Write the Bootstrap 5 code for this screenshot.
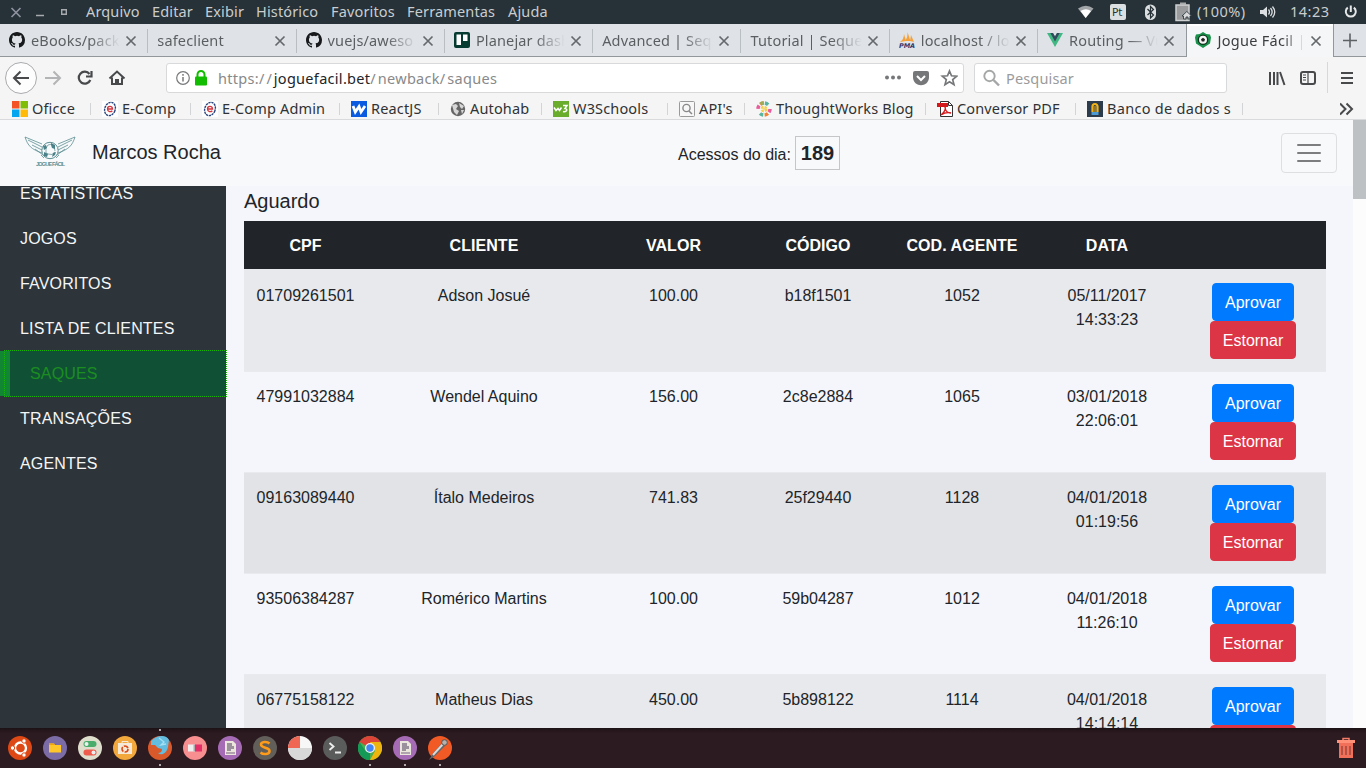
<!DOCTYPE html>
<html lang="pt-BR">
<head>
<meta charset="utf-8">
<title>Jogue Fácil</title>
<link rel="stylesheet" href="https://cdn.jsdelivr.net/npm/bootstrap@5.3.0/dist/css/bootstrap.min.css">
<style>
body{width:1366px;height:768px;overflow:hidden;font-family:"Liberation Sans",Arial,sans-serif;color:#212529;background:#f5f6fb}
svg{display:block;flex:none}
.chrome{font-family:"Noto Sans",sans-serif;font-size:14.5px;letter-spacing:.15px;white-space:nowrap}
.sysbar{height:24px;background:#263238;color:#c9cdcf;line-height:23px}
.wm{width:86px;padding-left:10px}
.menus{display:grid;grid-template-columns:66px 53px 51px 75px 76px 101px 60px}
.tray{display:grid;grid-template-columns:32px 33px 32px 22px 63px 30px 54px 22px;width:288px}
.tray span{letter-spacing:.5px;margin-top:-1px}
.tabs{height:33px;background:#dfe3e8;border-bottom:1px solid #92979c;color:#5c5f61}
.tabx{width:148.3px;height:32px;padding-left:9px;position:relative;line-height:34px}
.tabx:after{content:"";position:absolute;right:0;top:5px;height:24px;border-right:1px solid #b9bec2}
.tabx:nth-child(8):after,.tabx.on:after{display:none}
.tabx .ttl{flex:1;min-width:0;overflow:hidden;margin-left:6px;-webkit-mask:linear-gradient(90deg,#000 calc(100% - 30px),transparent)}
.tabx.plain .ttl{margin-left:0}
.tabx .cls{margin:1px 11px 0 5px}
.tabx.on{background:#f5f6f7;border:1px solid #92979c;border-width:0 1px;height:33px;width:147.6px;color:#3b3e40;padding:0 0 1px 8px;box-shadow:inset 0 2px #fff}
.tabx.on .ttl{letter-spacing:.3px;-webkit-mask:linear-gradient(90deg,#000 calc(100% - 22px),transparent)}
.tools{height:42px;background:#f5f5f6}
.back{width:32px;height:32px;margin-left:5px;border:1px solid #a9abad;border-radius:50%;background:#fdfdfd}
.field{height:30px;background:#fff;border:1px solid #d8d9da;border-radius:3px;color:#88898a}
.url{width:798px;margin-left:40px;padding:0 5px 0 9px}
.url .addr{letter-spacing:.3px;margin-top:1px}
.url .sl{letter-spacing:2px}
.find{width:253px;margin-left:10px;padding-left:8px;color:#9a9b9c}
.find span{margin-top:1px}
.marks{height:21px;background:#f5f5f6;border-bottom:1px solid #d9dadc;padding-left:12px;display:grid;grid-template-columns:90px 100px 149px 99px 103px 126px 77px 181px 150px 167px 1fr;color:#303234;line-height:19px}
.marks>div{display:flex;align-items:center;gap:4px;position:relative;height:19px}
.marks>div:nth-child(10){letter-spacing:.3px}
.marks>div:not(:last-child):after{content:"";position:absolute;right:11px;top:4px;height:12px;border-right:1px solid #d3d4d5}
.viewport{height:608px;overflow:hidden}
.topnav{width:1353px;height:66px;background:#f8f9fb;padding:0 16px 0 24px}
.brandname{font-size:20px;width:586px;margin:-2px 0 0 16px}
.hits{height:34px;width:45px;border:1px solid #c4c6c8;font-size:20px;font-weight:700;line-height:33px;text-align:center;margin:0 0 0 4px}
.navbar-toggler{width:56px;height:40px;border:1px solid #dedfe1;border-radius:4px;padding:0 12px}
.side{width:226px;height:542px;background:#2d353b;color:#fff;letter-spacing:.16px}
.side a{display:block;height:45px;line-height:45px;padding-left:20px;color:#f5f6f6;text-decoration:none}
.side a:first-child{height:30px;line-height:45px;display:flex;align-items:flex-end;overflow:hidden}
.side a:first-child span{height:45px}
.side a.cur{background:#105136;border-left:10px solid #118633;color:#1c8d20;position:relative}
.side a.cur:after{content:"";position:absolute;left:-6px;right:-1px;top:-1px;bottom:-1px;border:1px dotted #18b800}
.main{width:1127px;padding:0 27px 0 18px}
.main h5{font-size:20px;font-weight:400;line-height:24px;margin:3px 0 8px}
.grid-tb{table-layout:fixed;width:1082px;border-collapse:separate;border-spacing:0;text-align:center}
.grid-tb th{background:#212529;color:#fff;height:48px;padding:1px 0 0;letter-spacing:.05px}
.grid-tb td{border-top:1px solid #e8eaed;padding:13px 11px 11px;vertical-align:top;line-height:24px;height:101px}
.grid-tb tbody tr:first-child td{padding-top:14px;height:102px}
.grid-tb tr.s1 td{background:#e8e9ed}
.grid-tb tr.s2 td{background:#e1e3e7}
.acts{margin-top:-1px}
.btn{border-radius:4px;height:38px;padding-top:7px;padding-bottom:5px}
.btn-primary{background:#007bff;border-color:#007bff}
.btn-danger{background:#dc3545;border-color:#dc3545}
.scroller{width:13px;background:#fcfcfc;height:608px}
.thumb{height:79px;background:#bdc1c4}
.dock{height:40px;background:linear-gradient(#1d1216,#2c1b20 5px);padding:0 11px 0 8px}
.dock .ic{width:24px;height:40px;margin-right:11px;display:flex;align-items:center;position:relative}
.dock .run:after,.dock .top:before{content:"";position:absolute;left:11px;bottom:2px;width:2px;height:2px;border-radius:1px;background:#ddd}
.dock .top:before{bottom:37px}
</style>
</head>
<body>
<svg width="0" height="0" class="position-absolute">
<defs>
<symbol id="x" viewBox="0 0 12 12"><path d="M1.5 1.5l9 9M10.5 1.5l-9 9" stroke="#66696c" stroke-width="1.7"/></symbol>
<symbol id="gh" viewBox="0 0 16 16"><path fill="#17191b" d="M8 0C3.58 0 0 3.58 0 8c0 3.54 2.29 6.53 5.47 7.59.4.07.55-.17.55-.38 0-.19-.01-.82-.01-1.49-2.01.37-2.53-.49-2.69-.94-.09-.23-.48-.94-.82-1.13-.28-.15-.68-.52-.01-.53.63-.01 1.08.58 1.23.82.72 1.21 1.87.87 2.33.66.07-.52.28-.87.51-1.07-1.78-.2-3.64-.89-3.64-3.95 0-.87.31-1.59.82-2.15-.08-.2-.36-1.02.08-2.12 0 0 .67-.21 2.2.82a7.6 7.6 0 0 1 4 0c1.53-1.04 2.2-.82 2.2-.82.44 1.1.16 1.92.08 2.12.51.56.82 1.27.82 2.15 0 3.07-1.87 3.75-3.65 3.95.29.25.54.73.54 1.48 0 1.07-.01 1.93-.01 2.2 0 .21.15.46.55.38A8 8 0 0 0 16 8c0-4.42-3.58-8-8-8z"/></symbol>
<symbol id="ec" viewBox="0 0 16 16"><rect width="16" height="16" fill="#fff"/><ellipse cx="8" cy="8" rx="5.200" ry="6.800" transform="rotate(20 8 8)" fill="none" stroke="#28437d" stroke-width="1.400" stroke-dasharray="2.300 .7"/><path d="M5.500 8h5C10.500 4.500 5.500 4.500 5.500 8 5.500 11 9 11.200 10.300 9.700" fill="none" stroke="#d2353d" stroke-width="1.300"/></symbol>
<symbol id="doc" viewBox="0 0 24 24"><circle cx="12" cy="12" r="12" fill="#a66bb5"/><path d="M7 5h8l3 3v11H7z" fill="#ebe6dc"/><path d="M9 7h5v3h2v3h-3v2H9z" fill="#9a919d"/><path d="M8 17h9" stroke="#77617e"/></symbol>
</defs></svg>

<header class="chrome">
<div class="sysbar d-flex">
 <div class="wm d-flex align-items-center"><svg width="60" height="24" viewBox="0 0 60 24" fill="none"><path d="M1.500 8l9 9m0-9l-9 9" stroke="#8f919f" stroke-width="1.700"/><path d="M26 15.500h8" stroke="#a8abad" stroke-width="1.500"/><path d="M51.700 9.700h4.600v4.600h-4.600z" stroke="#a8abad" stroke-width="1.400"/></svg></div>
 <div class="menus"><span>Arquivo</span><span>Editar</span><span>Exibir</span><span>Histórico</span><span>Favoritos</span><span>Ferramentas</span><span>Ajuda</span></div>
 <div class="tray ms-auto align-items-center">
  <svg width="16" height="24"><path d="M0 8.500Q8 3 15.500 8.500L7.700 18z" fill="#a1a5a7"/><path d="M2.500 11Q8 7.500 13 11L7.700 18z" fill="#fff"/></svg>
  <svg width="18" height="24"><rect x="0" y="4" width="16" height="16" rx="2" fill="#dcdfe1"/><text x="2" y="16" font-size="10.500" letter-spacing="0" font-family="DejaVu Sans,sans-serif" fill="#263238">Pt</text></svg>
  <svg width="14" height="24"><rect x="2" y="4.500" width="11" height="15.500" rx="5.500" fill="#dcdfe1"/><path d="M4.500 9l6 6-3 3V6.500l3 3-6 5.500" fill="none" stroke="#263238" stroke-width="1.200"/></svg>
  <svg width="18" height="24"><path d="M5 2.500h6v2H5z" fill="#aaa"/><rect x="1" y="5" width="13" height="15.500" fill="#999b9c" stroke="#cfd1d2" stroke-width="1.500"/><path d="M8.500 19v-3H7l4.800-4.500 4.800 4.500H15v3h-2v-2h-2v2z" fill="#d7d9da" stroke="#263238" stroke-width=".8"/></svg>
  <span>(100%)</span>
  <svg width="18" height="24"><path d="M0 10h3l4-3.500v11L3 14H0z" fill="#dcdfe1"/><path d="M8.500 9.500q2 2.500 0 5M10.500 8q3.300 4 0 8M12.500 6.500q4.500 5.500 0 11" fill="none" stroke="#dcdfe1" stroke-width="1.300"/></svg>
  <span>14:23</span>
  <svg width="16" height="24"><path d="M3.800 7.600a5 5 0 1 0 6 0M6.800 5.500v6.500" fill="none" stroke="#e5e7e8" stroke-width="2"/></svg>
 </div>
</div>

<div class="tabs d-flex">
 <div class="tabx d-flex align-items-center"><svg width="16" height="16"><use href="#gh"/></svg><span class="ttl">eBooks/pack</span><svg class="cls" width="12" height="12"><use href="#x"/></svg></div>
 <div class="tabx plain d-flex align-items-center"><span class="ttl">safeclient</span><svg class="cls" width="12" height="12"><use href="#x"/></svg></div>
 <div class="tabx d-flex align-items-center"><svg width="16" height="16"><use href="#gh"/></svg><span class="ttl">vuejs/aweso</span><svg class="cls" width="12" height="12"><use href="#x"/></svg></div>
 <div class="tabx d-flex align-items-center"><svg width="16" height="16"><rect width="16" height="16" rx="2" fill="#063b32"/><path d="M2.500 2.500h4.500v10.500H2.500zM9 2.500h4.500v6.500H9z" fill="#fff"/></svg><span class="ttl">Planejar dash</span><svg class="cls" width="12" height="12"><use href="#x"/></svg></div>
 <div class="tabx plain d-flex align-items-center"><span class="ttl">Advanced | Seque</span><svg class="cls" width="12" height="12"><use href="#x"/></svg></div>
 <div class="tabx plain d-flex align-items-center"><span class="ttl">Tutorial | Sequel</span><svg class="cls" width="12" height="12"><use href="#x"/></svg></div>
 <div class="tabx d-flex align-items-center"><svg width="16" height="16"><path d="M1 10Q5 7 5 2l2 7zM6 9Q9 5 8.500 0l3 9zM11 9l1-6 3 7z" fill="#f4a13b"/><text x="0" y="15.500" font-size="6.500" textLength="16" letter-spacing="0" font-style="italic" font-weight="bold" font-family="DejaVu Sans,sans-serif" fill="#36396c">PMA</text></svg><span class="ttl">localhost / loc</span><svg class="cls" width="12" height="12"><use href="#x"/></svg></div>
 <div class="tabx d-flex align-items-center"><svg width="16" height="16"><path d="M0 1h6l2 3.500L10 1h6L8 15z" fill="#41b883"/><path d="M3.300 1H6l2 3.500L10 1h2.700L8 9.500z" fill="#35495e"/></svg><span class="ttl">Routing — Vue</span><svg class="cls" width="12" height="12"><use href="#x"/></svg></div>
 <div class="tabx on d-flex align-items-center"><svg width="16" height="16"><path d="M1 2.500q4 0 7-2.500 3 2.500 7 2.500l1 3-1 6-7 4.500-7-4.500-1-6z" fill="#18914a"/><circle cx="8" cy="7.800" r="5.300" fill="#12351f"/><circle cx="8" cy="7.800" r="4" fill="#f7f7f7"/><path d="M8 5.800l2 1.500-.8 2.300H6.800L6 7.300z" fill="#222"/></svg><span class="ttl">Jogue Fácil |</span><svg class="cls" width="12" height="12"><use href="#x"/></svg></div>
 <svg class="ms-auto me-2" width="16" height="32"><path d="M1 16.500h14M8 9.500v14" stroke="#5e6265" stroke-width="1.600"/></svg>
</div>

<div class="tools d-flex align-items-center">
 <div class="back d-flex align-items-center justify-content-center"><svg width="18" height="16"><path d="M17 8H2M8.500 1.500L2 8l6.500 6.500" fill="none" stroke="#47494b" stroke-width="2"/></svg></div>
 <svg width="89" height="32"><path d="M8 16h15M16.500 9.500L23 16l-6.500 6.500" fill="none" stroke="#b3b4b5" stroke-width="2"/><path d="M52.500 12a6 6 0 1 0 .8 6M54.500 9v5.500H49" fill="none" stroke="#47494b" stroke-width="2.200"/><path d="M72.500 16.500l7.500-7 7.500 7M75 15.500V22h10v-6.500" fill="none" stroke="#47494b" stroke-width="2"/><path d="M78 22v-5h4v5" fill="#47494b"/></svg>
 <div class="field url d-flex align-items-center">
  <svg width="42" height="20"><circle cx="7" cy="10" r="6.300" fill="none" stroke="#77797a" stroke-width="1.200"/><path d="M7 9v4.500M7 6v1.700" stroke="#77797a" stroke-width="1.500"/><rect x="19" y="8.500" width="12" height="9" rx="1" fill="#12bc00"/><path d="M21.500 9V6.500a3.500 3.500 0 0 1 7 0V9" fill="none" stroke="#12bc00" stroke-width="2"/></svg>
  <span class="addr">https:<span class="sl">//</span><span class="text-dark">joguefacil.bet</span><span class="sl">/</span>newback<span class="sl">/</span>saques</span>
  <svg class="ms-auto" width="74" height="20"><g fill="#757779"><circle cx="3" cy="9.500" r="2"/><circle cx="9" cy="9.500" r="2"/><circle cx="15" cy="9.500" r="2"/><path d="M31 3h12q2 0 2 2v4c0 11-16 11-16 0V5q0-2 2-2z"/></g><path d="M33 8l4 4 4-4" fill="none" stroke="#fff" stroke-width="2"/><path d="M65.500 3l2 4.800 5.200.4-4 3.400 1.300 5-4.500-2.800-4.500 2.800 1.300-5-4-3.400 5.200-.4z" fill="none" stroke="#757779" stroke-width="1.700"/></svg>
 </div>
 <div class="field find d-flex align-items-center"><svg width="23" height="18"><circle cx="6.500" cy="7" r="5.200" fill="none" stroke="#a5a6a7" stroke-width="1.900"/><path d="M10.500 11l5.500 5.500" stroke="#a5a6a7" stroke-width="2.400"/></svg><span>Pesquisar</span></div>
 <svg width="97" height="42" class="ms-auto"><path d="M1 15v13M5 15v13M8.500 15v13M11 15l4.500 13" stroke="#47494b" stroke-width="2"/><rect x="32" y="15" width="14" height="12" rx="2" fill="none" stroke="#47494b" stroke-width="2"/><path d="M39 15v12M34 18h3M34 20.500h3M34 23h3" stroke="#47494b" stroke-width="1.200"/><path d="M58.500 5v31" stroke="#d7d8d9"/><path d="M72 16h12M72 21h12M72 26h12" stroke="#47494b" stroke-width="2"/></svg>
</div>

<div class="marks">
 <div><svg width="16" height="16"><path d="M0 0h7.500v7.500H0z" fill="#f35325"/><path d="M8.500 0H16v7.500H8.500z" fill="#81bc06"/><path d="M0 8.500h7.500V16H0z" fill="#05a6f0"/><path d="M8.500 8.500H16V16H8.500z" fill="#ffba08"/></svg>Oficce</div>
 <div><svg width="16" height="16"><use href="#ec"/></svg>E-Comp</div>
 <div><svg width="16" height="16"><use href="#ec"/></svg>E-Comp Admin</div>
 <div><svg width="16" height="16"><rect width="16" height="16" fill="#0a5be0"/><path d="M2 5l2.300 6L8 5.500 10 11l4-6" fill="none" stroke="#fff" stroke-width="2.800"/></svg>ReactJS</div>
 <div><svg width="16" height="16"><circle cx="8" cy="8" r="7.200" fill="#666"/><path d="M2 4l4-1 2 2-2 3 3 2-2 4-3-3zM9 2l5 3-2 3-2-2zM11 9h3l-2 4z" fill="#d7d7d7"/></svg>Autohab</div>
 <div><svg width="16" height="16"><rect width="16" height="16" fill="#6aad2d"/><path d="M1 6.500l2 3 2-2 1.500 2 2-3M10 4.500h4l-2 3c3 0 2 4-2 3" fill="none" stroke="#fff" stroke-width="1.500"/></svg>W3Schools</div>
 <div><svg width="16" height="16"><rect x=".5" y=".5" width="15" height="15" rx="1" fill="#f7f7f7" stroke="#9a9a9a"/><circle cx="7.500" cy="7" r="3.600" fill="none" stroke="#888" stroke-width="1.400"/><path d="M10 10l3 3" stroke="#888" stroke-width="1.500"/></svg>API's</div>
 <div><svg width="16" height="16" fill="none" stroke-width="3.500"><circle cx="8" cy="8" r="6" stroke="#e85c9b" stroke-dasharray="3.500 15"/><circle cx="8" cy="8" r="6" stroke="#f08231" stroke-dasharray="3.500 15" stroke-dashoffset="-5"/><circle cx="8" cy="8" r="6" stroke="#56b6a0" stroke-dasharray="3.500 15" stroke-dashoffset="-10"/><circle cx="8" cy="8" r="6" stroke="#9cad57" stroke-dasharray="3.500 34" stroke-dashoffset="-24"/><circle cx="8" cy="8" r="2" stroke="#f3cf4d" stroke-width="3" stroke-dasharray="2 1"/></svg>ThoughtWorks Blog</div>
 <div><svg width="16" height="16"><path d="M3.500.5h8l4 4v11h-12z" fill="#fff" stroke="#333"/><path d="M11.500.5v4h4" fill="none" stroke="#333"/><path d="M0 2h11v4H0z" fill="#d3191b"/><path d="M4 14C8 11 9 7 8 6c0 4 3 6 6 6-3-1-7 0-10 2" fill="none" stroke="#d3191b" stroke-width="1.400"/></svg>Conversor PDF</div>
 <div><svg width="16" height="16"><rect width="16" height="16" fill="#2d3c4c"/><path d="M5.500 11V5.500a2.500 2.500 0 0 1 5 0V11" fill="none" stroke="#f2b319" stroke-width="2.200"/><path d="M8 5v6" stroke="#f2b319"/><path d="M4.500 11h7v3h-7z" fill="#4d9bd5"/></svg>Banco de dados s</div>
 <div><svg width="18" height="16" class="ms-auto me-2"><path d="M-1 2.500L4.500 8-1 13.500M5.500 2.500L11 8l-5.500 5.500" transform="translate(1)" fill="none" stroke="#47494b" stroke-width="2"/></svg></div>
</div>
</header>

<div class="viewport d-flex">
 <div>
  <nav class="topnav d-flex align-items-center">
   <svg width="52" height="34" viewBox="0 0 52 34" fill="none" stroke="#5a8d92"><path d="M1 1l17 7M1 1c3 9 6 12 17 16M4 4l14 7M8 9l10 5M11 13l8 6M17 19l3 3M51 1L34 8M51 1c-3 9-6 12-17 16M48 4l-14 7M44 9l-10 5M41 13l-8 6M35 19l-3 3" stroke-width=".8"/><circle cx="26" cy="14.500" r="8.200" fill="#f8f9fb" stroke-width="1"/><path d="M22 12l2-3 4-1M24 18l-2-1v-5M24 18l4 .5 3-2.500M30 10l1 5" stroke-width=".7"/><path d="M27 7l4 2v4l-3-1-1-3zM19 10l3-1 1 3-3 2zM20 16l4 2-1 3-3-1zM29 17l3-1-1 3-3 2z" fill="#4a8087" stroke="none"/><text x="12" y="30" font-size="5.500" font-weight="bold" textLength="29" stroke="none" fill="#5a8d92" font-family="Liberation Sans,sans-serif">JOGUE FÁCIL</text></svg>
   <span class="brandname">Marcos Rocha</span>
   <span style="padding-top:3px">Acessos do dia:</span><span class="hits">189</span>
   <button class="navbar-toggler ms-auto" aria-label="Menu"><svg width="30" height="30" viewBox="0 0 30 30"><path stroke="#7c7d7e" stroke-linecap="round" stroke-width="2" d="M4 7h22M4 15h22M4 23h22"/></svg></button>
  </nav>
  <div class="d-flex">
   <aside class="side"><a href="#"><span>ESTATISTICAS</span></a><a href="#">JOGOS</a><a href="#">FAVORITOS</a><a href="#">LISTA DE CLIENTES</a><a href="#" class="cur">SAQUES</a><a href="#">TRANSAÇÕES</a><a href="#">AGENTES</a></aside>
   <main class="main">
    <h5>Aguardo</h5>
    <table class="grid-tb">
     <colgroup><col width="123"><col width="234"><col width="145"><col width="144"><col width="144"><col width="146"><col width="146"></colgroup>
     <thead><tr><th>CPF</th><th>CLIENTE</th><th>VALOR</th><th>CÓDIGO</th><th>COD. AGENTE</th><th>DATA</th><th></th></tr></thead>
     <tbody>
      <tr class="s1"><td>01709261501</td><td>Adson Josué</td><td>100.00</td><td>b18f1501</td><td>1052</td><td>05/11/2017 14:33:23</td><td><div class="acts d-flex flex-column align-items-center"><button class="btn btn-primary">Aprovar</button><button class="btn btn-danger">Estornar</button></div></td></tr>
      <tr><td>47991032884</td><td>Wendel Aquino</td><td>156.00</td><td>2c8e2884</td><td>1065</td><td>03/01/2018 22:06:01</td><td><div class="acts d-flex flex-column align-items-center"><button class="btn btn-primary">Aprovar</button><button class="btn btn-danger">Estornar</button></div></td></tr>
      <tr class="s2"><td>09163089440</td><td>Ítalo Medeiros</td><td>741.83</td><td>25f29440</td><td>1128</td><td>04/01/2018 01:19:56</td><td><div class="acts d-flex flex-column align-items-center"><button class="btn btn-primary">Aprovar</button><button class="btn btn-danger">Estornar</button></div></td></tr>
      <tr><td>93506384287</td><td>Romérico Martins</td><td>100.00</td><td>59b04287</td><td>1012</td><td>04/01/2018 11:26:10</td><td><div class="acts d-flex flex-column align-items-center"><button class="btn btn-primary">Aprovar</button><button class="btn btn-danger">Estornar</button></div></td></tr>
      <tr class="s1"><td>06775158122</td><td>Matheus Dias</td><td>450.00</td><td>5b898122</td><td>1114</td><td>04/01/2018 14:14:14</td><td><div class="acts d-flex flex-column align-items-center"><button class="btn btn-primary">Aprovar</button><button class="btn btn-danger">Estornar</button></div></td></tr>
     </tbody>
    </table>
   </main>
  </div>
 </div>
 <div class="scroller"><div class="thumb"></div></div>
</div>

<footer class="dock d-flex align-items-center">
 <div class="ic"><svg width="24" height="24"><circle cx="12" cy="12" r="12" fill="#dd4814"/><circle cx="12.500" cy="12" r="5.500" fill="none" stroke="#fff" stroke-width="2.300"/><g fill="#fff" stroke="#dd4814"><circle cx="4.500" cy="12" r="2.200"/><circle cx="16" cy="5" r="2.200"/><circle cx="16" cy="19" r="2.200"/></g></svg></div>
 <div class="ic"><svg width="24" height="24"><circle cx="12" cy="12" r="12" fill="#7c6ca6"/><path d="M6 7.500h5l1 1.500h6v7.500H6z" fill="#ffc62b"/><path d="M6 7.500h5l1 1.500H6z" fill="#f0a30d"/></svg></div>
 <div class="ic"><svg width="24" height="24"><circle cx="12" cy="12" r="12" fill="#dfddcc"/><rect x="5.500" y="5" width="13" height="6" rx="3" fill="#48ad6b"/><rect x="5.500" y="13.500" width="13" height="6" rx="3" fill="#ed5c4d"/><g fill="#eee"><circle cx="8.500" cy="8" r="2"/><circle cx="15.500" cy="16.500" r="2"/></g></svg></div>
 <div class="ic"><svg width="24" height="24"><circle cx="12" cy="12" r="12" fill="#f2a83c"/><path d="M5 7h14v11H5z" fill="#f5e9d7"/><path d="M9 8V5.500h6V8" fill="none" stroke="#f5e9d7"/><circle cx="12" cy="13" r="3" fill="none" stroke="#dd4814" stroke-width="1.600" stroke-dasharray="5 1.280"/></svg></div>
 <div class="ic run top"><svg width="24" height="24"><circle cx="12" cy="12" r="12" fill="#d9592b"/><path d="M3 5Q8 0 14 0q5 0 7 4l-1 7q-1 5-5 7-3 1-5-1 4 0 4-4l-4-1-3-3-4 0z" fill="#62bde0"/><path d="M11 2l5 4-3 3 5-1" fill="none" stroke="#a4def0" stroke-width="1.300"/></svg></div>
 <div class="ic"><svg width="24" height="24"><circle cx="12" cy="12" r="12" fill="#f78e8f"/><path d="M5 8.500h7v7H5z" fill="#eee"/><path d="M12 8.500h7v7h-7z" fill="#e52e68"/><path d="M10.500 8.500H12v7h-1.500z" fill="#aaa"/></svg></div>
 <div class="ic"><svg width="24" height="24"><use href="#doc"/></svg></div>
 <div class="ic"><svg width="24" height="24"><circle cx="12" cy="12" r="12" fill="#625e59"/><path d="M16.500 7.500C14 5 8 5.500 8 8.500c0 4 8.500 2.500 8.500 6.500 0 3.500-6 4-9 1.500" fill="none" stroke="#ff9b1a" stroke-width="2.500"/></svg></div>
 <div class="ic"><svg width="24" height="24"><circle cx="12" cy="12" r="12" fill="#f7f7f7"/><path d="M12 12V0A12 12 0 0 0 0 12z" fill="#ef6752"/><path d="M0 12a12 12 0 0 0 24 0z" fill="#d8d8d8"/></svg></div>
 <div class="ic"><svg width="24" height="24"><circle cx="12" cy="12" r="12" fill="#5a5b5b"/><path d="M6.500 7l4 3.500-4 3.500M12 16.500h6" fill="none" stroke="#ededed" stroke-width="1.900"/></svg></div>
 <div class="ic run"><svg width="24" height="24"><circle cx="12" cy="12" r="12" fill="#4caf50"/><path d="M12 12L1.600 6A12 12 0 0 1 22.400 6z" fill="#db4437"/><path d="M1.600 6L7.500 15 12 12V24A12 12 0 0 1 1.600 6z" fill="#159957"/><path d="M12 6h10.400A12 12 0 0 1 12 24l5-9z" fill="#eeb50f"/><circle cx="12" cy="12" r="5" fill="#f2f2f2"/><circle cx="12" cy="12" r="3.700" fill="#4285f4"/></svg></div>
 <div class="ic run"><svg width="24" height="24"><use href="#doc"/></svg></div>
 <div class="ic run"><svg width="24" height="24"><circle cx="12" cy="12" r="12" fill="#f15a24"/><path d="M1 24l4-7 9-10 3 3-10 10z" fill="#666"/><path d="M5 19L15 8" stroke="#d8d8d8" stroke-width="2"/><circle cx="16.500" cy="6.500" r="2.800" fill="#b8b1ab" stroke="#555"/></svg></div>
 <svg class="ms-auto" width="18" height="22" viewBox="0 0 18 22"><path d="M6 3V1.500h6V3" fill="none" stroke="#f47b67" stroke-width="1.500"/><path d="M0 3h18v3H0z" fill="#ff9078"/><path d="M2 6h14v15H2z" fill="#f0705a"/><path d="M5 9v9M9 9v9M13 9v9" stroke="#a94c42" stroke-width="1.700"/></svg>
</footer>
<script src="https://cdn.jsdelivr.net/npm/bootstrap@5.3.0/dist/js/bootstrap.bundle.min.js"></script>
</body>
</html>
